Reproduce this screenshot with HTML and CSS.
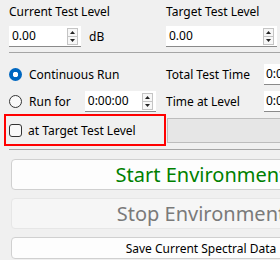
FILE: index.html
```html
<!DOCTYPE html>
<html lang="en">

<head>
    <meta charset="UTF-8">
    <meta name="viewport" content="width=device-width, initial-scale=1.0">
    <title>Environment Control</title>
    <link rel="stylesheet" href="styles.css">
</head>

<body>
    <div class="panel">
        <div class="levels">
            <div class="field">
                <div class="label">Current Test Level</div>
                <div class="spin-row">
                    <div class="spin spin-level">
                        <span class="value">0.00</span>
                        <svg class="arrows" width="11" height="17" viewBox="0 0 11 17">
                            <rect x="0.5" y="0.5" width="10" height="16" fill="#f7f7f7" stroke="#c4c4c4" />
                            <line x1="1" y1="8.5" x2="10" y2="8.5" stroke="#c4c4c4" />
                            <path d="M3 6 L5.5 3 L8 6 Z" fill="#222" />
                            <path d="M3 11 L5.5 14 L8 11 Z" fill="#222" />
                        </svg>
                    </div>
                    <span class="unit">dB</span>
                </div>
            </div>
            <div class="field">
                <div class="label">Target Test Level</div>
                <div class="spin spin-target">
                    <span class="value">0.00</span>
                    <svg class="arrows" width="11" height="17" viewBox="0 0 11 17">
                        <rect x="0.5" y="0.5" width="10" height="16" fill="#f7f7f7" stroke="#c4c4c4" />
                        <line x1="1" y1="8.5" x2="10" y2="8.5" stroke="#c4c4c4" />
                        <path d="M3 6 L5.5 3 L8 6 Z" fill="#222" />
                        <path d="M3 11 L5.5 14 L8 11 Z" fill="#222" />
                    </svg>
                </div>
            </div>
        </div>

        <div class="rule"></div>

        <div class="run">
            <div class="option"><span class="radio checked"></span>Continuous Run</div>
            <div class="label">Total Test Time</div>
            <div class="edit">0:00:00</div>

            <div class="option">
                <span class="radio"></span>Run for
                <div class="spin spin-time">
                    <span class="value">0:00:00</span>
                    <svg class="arrows" width="11" height="17" viewBox="0 0 11 17">
                        <rect x="0.5" y="0.5" width="10" height="16" fill="#f7f7f7" stroke="#c4c4c4" />
                        <line x1="1" y1="8.5" x2="10" y2="8.5" stroke="#c4c4c4" />
                        <path d="M3 6 L5.5 3 L8 6 Z" fill="#222" />
                        <path d="M3 11 L5.5 14 L8 11 Z" fill="#222" />
                    </svg>
                </div>
            </div>
            <div class="label">Time at Level</div>
            <div class="edit">0:00:00</div>
        </div>

        <div class="hold-row">
            <div class="check-frame"><span class="checkbox"></span>at Target Test Level</div>
            <div class="level-bar"></div>
        </div>

        <div class="rule rule-low"></div>

        <div class="actions">
            <button class="btn btn-start">Start Environment</button>
            <button class="btn btn-stop" disabled>Stop Environment</button>
            <button class="btn btn-save">Save Current Spectral Data</button>
        </div>
    </div>
</body>

</html>
```

FILE: styles.css
```css
html {
    overflow: hidden;
}

body {
    margin: 0;
    background: #f0f0f0;
    font-family: 'Noto Sans', sans-serif;
    font-size: 12px;
    color: #000;
}

.panel {
    width: 400px;
    padding: 4px 0 0 9px;
}

.label {
    line-height: 16px;
    white-space: nowrap;
}

.levels {
    display: grid;
    grid-template-columns: 157px 1fr;
}

.field .label {
    margin-bottom: 6px;
}

.spin-row {
    display: flex;
    align-items: center;
    gap: 8px;
}

.spin {
    display: flex;
    align-items: center;
    justify-content: space-between;
    height: 20px;
    padding: 0 3px 0 3px;
    background: #fff;
    border-bottom: 1px solid #8a8a8a;
    box-sizing: content-box;
}

.spin-level {
    width: 66px;
}

.spin-target {
    width: 105px;
}

.spin-time {
    width: 65px;
    margin-left: 14px;
}

.value {
    line-height: 20px;
}

.unit {
    line-height: 16px;
}

.rule {
    height: 1px;
    margin-top: 5px;
    background: #a5a5a5;
}

.run {
    display: grid;
    grid-template-columns: 157px 98px 1fr;
    grid-auto-rows: 21px;
    row-gap: 6px;
    align-items: center;
    margin-top: 11px;
}

.option {
    display: flex;
    align-items: center;
    white-space: nowrap;
}

.radio {
    width: 11px;
    height: 11px;
    margin-right: 7px;
    border: 1px solid #333;
    border-radius: 50%;
    background: #f9f9f9;
}

.radio.checked {
    width: 13px;
    height: 13px;
    border: none;
    background: radial-gradient(circle, #fff 0 2.5px, #0067c0 3px);
}

.edit {
    height: 20px;
    padding-left: 2px;
    line-height: 20px;
    background: #fff;
    border-bottom: 1px solid #8a8a8a;
    white-space: nowrap;
    overflow: hidden;
}

.hold-row {
    display: flex;
    align-items: center;
    margin-top: 2px;
    margin-left: -5px;
}

.check-frame {
    display: flex;
    align-items: center;
    width: 155px;
    height: 28px;
    padding-left: 3px;
    border: 2px solid #f00;
}

.checkbox {
    width: 11px;
    height: 11px;
    margin-right: 6px;
    border: 1px solid #333;
    border-radius: 3px;
    background: #f9f9f9;
}

.level-bar {
    flex: 1;
    height: 23px;
    margin-left: 1px;
    background: #e6e6e6;
    border: 1px solid #bcbcbc;
}

.rule-low {
    margin-top: 3px;
}

.actions {
    display: flex;
    flex-direction: column;
    gap: 8px;
    margin: 9px 0 0 2px;
}

button {
    font-family: 'Noto Sans', sans-serif;
    border-radius: 4px;
    cursor: pointer;
}

.btn {
    width: 380px;
    padding: 0;
    background: #fdfdfd;
    border: 1px solid #d0d0d0;
}

.btn-start {
    height: 31px;
    font-size: 20px;
    color: #008000;
}

.btn-stop {
    height: 31px;
    font-size: 20px;
    color: #7a7a7a;
    background: #f6f6f6;
    border-color: #e6e6e6;
}

.btn-save {
    height: 22px;
    font-size: 12px;
    color: #000;
}
```
